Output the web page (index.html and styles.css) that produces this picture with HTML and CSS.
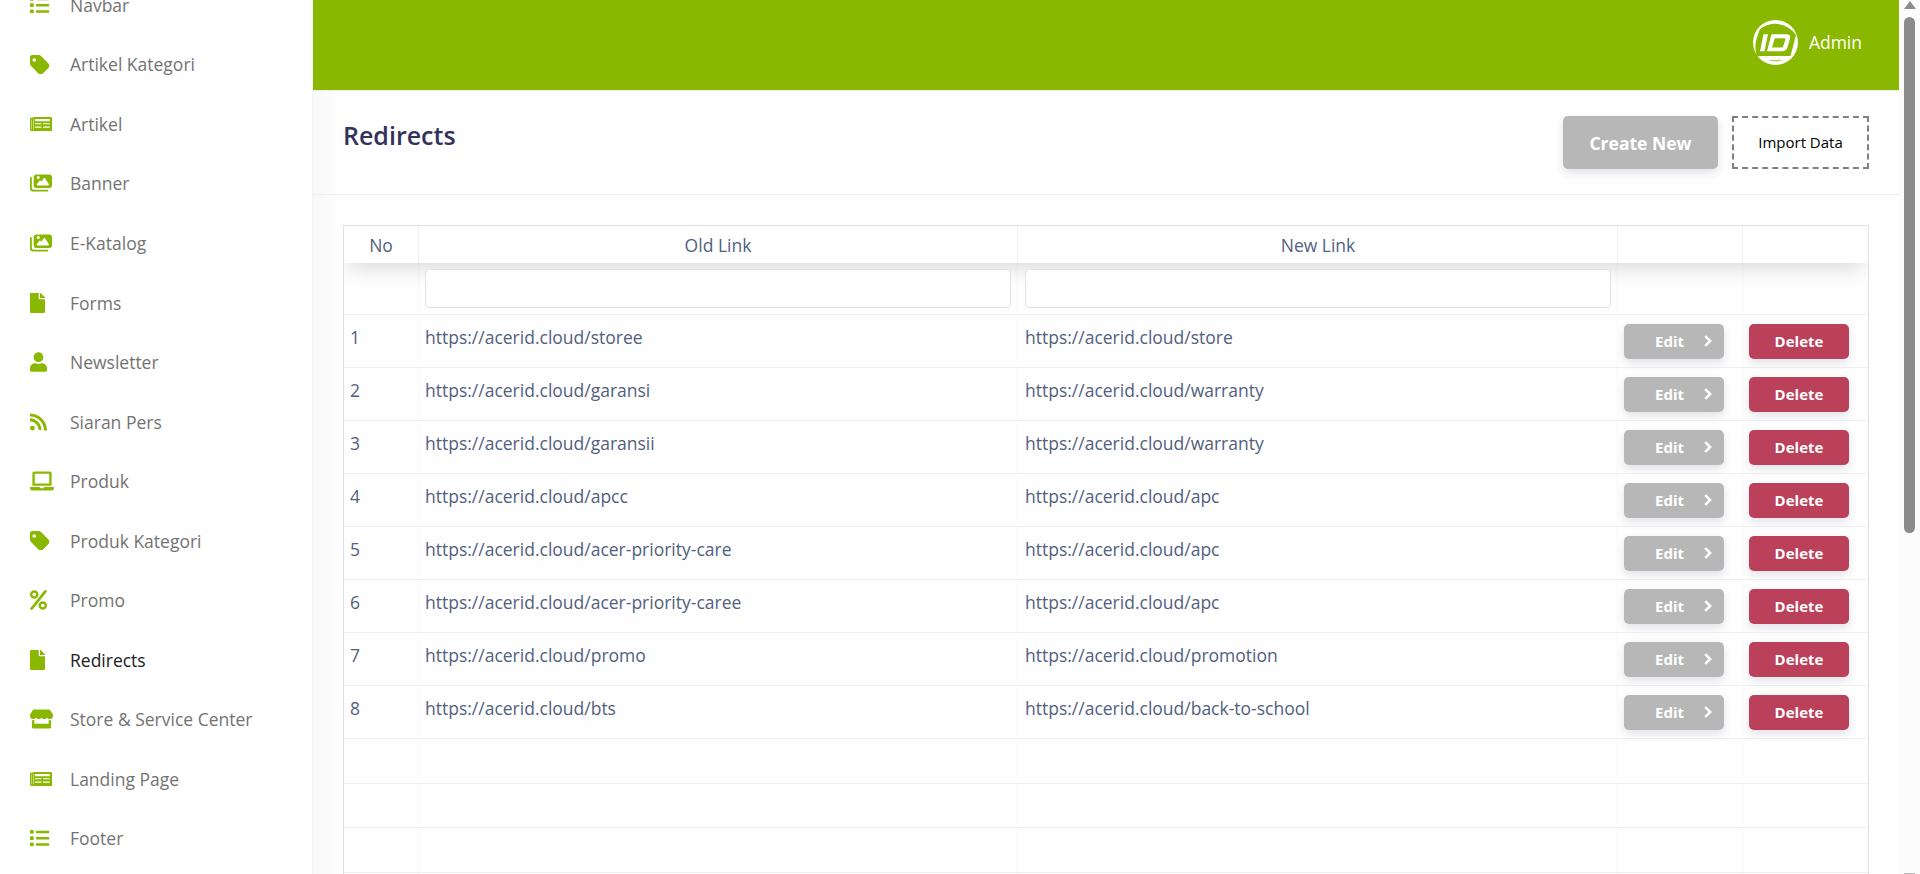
FILE: index.html
```
<!DOCTYPE html>
<html lang="id">
<head>
<meta charset="utf-8">
<title>Redirects</title>
<link rel="stylesheet" href="styles.css">
</head>
<body>
<svg class="defs" aria-hidden="true">
  <symbol id="i-list" viewBox="16 48 496 416"><path d="M40 48h48q24 0 24 24v48q0 24-24 24H40q-24 0-24-24V72q0-24 24-24zM192 64h288a32 32 0 0 1 0 64H192a32 32 0 0 1 0-64zM192 224h288a32 32 0 0 1 0 64H192a32 32 0 0 1 0-64zM192 384h288a32 32 0 0 1 0 64H192a32 32 0 0 1 0-64zM40 208h48q24 0 24 24v48q0 24-24 24H40q-24 0-24-24v-48q0-24 24-24zM40 368h48q24 0 24 24v48q0 24-24 24H40q-24 0-24-24v-48q0-24 24-24z"/></symbol>
  <symbol id="i-tag" viewBox="0 32 438 438"><path d="M0 80v149.500c0 17 6.700 33.300 18.700 45.300l176 176c25 25 65.500 25 90.500 0L418.700 317.300c25-25 25-65.500 0-90.500l-176-176c-12-12-28.300-18.700-45.300-18.700H48C21.500 32 0 53.500 0 80zm96 24a40 40 0 1 1 0 80 40 40 0 1 1 0-80z"/></symbol>
  <symbol id="i-news" viewBox="0 64 596 384"><path fill-rule="evenodd" d="M572 64H98c-13 0-24 8-28 20H24C10 84 0 98 0 112v288c0 26 22 48 48 48h524c14 0 24-10 24-24V88c0-14-10-24-24-24zM36 132h12v268q-6 8-12 0zM134 120h400v56H134zM134 234h176v28H134zM354 234h180v28H354zM134 322h176v32H134zM354 322h180v32H354zM82 112h14v292H82z"/></symbol>
  <symbol id="i-images" viewBox="0 0 576 512"><path d="M160 32c-35.300 0-64 28.700-64 64v224c0 35.300 28.700 64 64 64h352c35.300 0 64-28.700 64-64V96c0-35.300-28.700-64-64-64H160zm236 106.700 96 144c4.900 7.400 5.400 16.800 1.200 24.600S480.900 320 472 320H200c-9.200 0-17.600-5.300-21.600-13.600s-2.900-18.200 2.900-25.400l64-80c4.600-5.700 11.400-9 18.700-9s14.200 3.300 18.700 9l17.300 21.600 56-84c4.500-6.600 12-10.600 20-10.600s15.500 4 20 10.700zM176 112a40 40 0 1 1 80 0 40 40 0 1 1-80 0zM48 120c0-13.300-10.700-24-24-24S0 106.700 0 120v296q0 64 64 64h392c13.300 0 24-10.700 24-24s-10.700-24-24-24H96q-48 0-48-48V120z"/></symbol>
  <symbol id="i-file" viewBox="0 0 384 512"><path d="M224 136V0H24C10.700 0 0 10.700 0 24v464c0 13.300 10.700 24 24 24h336c13.300 0 24-10.700 24-24V160H248c-13.200 0-24-10.800-24-24zm160-14.100v6.100H256V0h6.100c6.400 0 12.500 2.500 17 7l97.900 98c4.500 4.500 7 10.600 7 16.900z"/></symbol>
  <symbol id="i-user" viewBox="0 0 448 512"><path d="M224 256c70.700 0 128-57.300 128-128S294.700 0 224 0 96 57.300 96 128s57.300 128 128 128zm89.600 32h-16.700c-22.200 10.200-46.900 16-72.900 16s-50.600-5.800-72.900-16h-16.700C60.200 288 0 348.200 0 422.400V464c0 26.500 21.500 48 48 48h352c26.500 0 48-21.500 48-48v-41.600c0-74.200-60.200-134.400-134.400-134.400z"/></symbol>
  <symbol id="i-rss" viewBox="0 0 448 512"><path d="M128 416a64 64 0 1 1-128 0 64 64 0 0 1 128 0zm175.700 47.300C295.400 304.400 168.400 169 .8 160.300-8.300 159.800 0 168 0 176v48c0 8.400 6.500 15.500 14.900 16 111.800 7.300 201.500 96.700 208.800 208.800.5 8.400 7.600 14.900 16 14.900h48c9.100 0 16.500-7.700 16-16.400zm144.200.2C439.600 229.700 251.500 40.400 16.500 32 7.500 31.700 0 39 0 48v48c0 8.600 6.800 15.600 15.500 16 191.200 7.800 344.600 161.300 352.500 352.500.4 8.600 7.400 15.500 16 15.500h48c9.100 0 16.300-7.500 15.900-16.500z"/></symbol>
  <symbol id="i-laptop" viewBox="0 0 640 512"><path fill-rule="evenodd" d="M624 416H381.500c-.7 19.800-14.700 32-32.700 32H288c-18.700 0-33-17.500-32.800-32H16c-8.800 0-16 7.200-16 16v16c0 35.200 28.800 64 64 64h512c35.200 0 64-28.800 64-64v-16c0-8.800-7.200-16-16-16zM576 48c0-26.400-21.600-48-48-48H112C85.600 0 64 21.600 64 48v336h512V48zm-64 272H128V64h384v256z"/></symbol>
  <symbol id="i-percent" viewBox="0 0 448 512"><path fill-rule="evenodd" d="M112 224a112 112 0 1 0 0-224 112 112 0 0 0 0 224zm0-160a48 48 0 1 1 0 96 48 48 0 0 1 0-96zM336 288a112 112 0 1 0 0 224 112 112 0 0 0 0-224zm0 160a48 48 0 1 1 0-96 48 48 0 0 1 0 96z"/><path d="M392 0h32q32 4 18 36L80 494q-10 18-30 18H24q-30-6-16-36L366 16q10-14 26-16z"/></symbol>
  <symbol id="i-store" viewBox="0 0 616 512"><path d="M602 118.600 537.100 15C531.300 5.700 521 0 510 0H106C95 0 84.700 5.700 78.900 15L14 118.600c-33.500 53.500-3.800 127.900 58.800 136.400 4.500.6 9.100.9 13.700.9 29.600 0 55.800-13 73.800-33.100 18 20.100 44.300 33.100 73.800 33.100 29.600 0 55.800-13 73.800-33.100 18 20.100 44.300 33.100 73.800 33.100 29.600 0 55.800-13 73.800-33.100 18.100 20.100 44.300 33.100 73.800 33.100 4.700 0 9.200-.3 13.700-.9 62.800-8.400 92.600-82.800 59-136.400zM529.500 288c-10 0-19.900-1.500-29.500-3.800V384H116v-99.800c-9.600 2.200-19.500 3.800-29.500 3.800-6 0-12.100-.4-18-1.200-5.600-.8-11.100-2.100-16.400-3.600V480c0 17.700 14.300 32 32 32h448c17.700 0 32-14.300 32-32V283.200c-5.400 1.600-10.800 2.900-16.400 3.600-6.100.8-12.100 1.200-18.200 1.200z"/></symbol>
  <symbol id="i-chev" viewBox="0 0 8 12"><path d="M1.200 1.100 6.200 6l-5 4.900" fill="none" stroke="currentColor" stroke-width="2.500"/></symbol>
</svg>

<div class="app">
  <nav class="sidebar">
    <a class="nav-item"><span class="nav-icon"><svg width="19.500" height="16.400"><use href="#i-list"/></svg></span>Navbar</a>
    <a class="nav-item"><span class="nav-icon"><svg width="19.500" height="19.500"><use href="#i-tag"/></svg></span>Artikel Kategori</a>
    <a class="nav-item"><span class="nav-icon"><svg width="22" height="14.200"><use href="#i-news"/></svg></span>Artikel</a>
    <a class="nav-item"><span class="nav-icon"><svg width="22" height="20"><use href="#i-images"/></svg></span>Banner</a>
    <a class="nav-item"><span class="nav-icon"><svg width="22" height="20"><use href="#i-images"/></svg></span>E-Katalog</a>
    <a class="nav-item"><span class="nav-icon"><svg width="15" height="20"><use href="#i-file"/></svg></span>Forms</a>
    <a class="nav-item"><span class="nav-icon"><svg width="17" height="20"><use href="#i-user"/></svg></span>Newsletter</a>
    <a class="nav-item"><span class="nav-icon"><svg width="17" height="20"><use href="#i-rss"/></svg></span>Siaran Pers</a>
    <a class="nav-item"><span class="nav-icon"><svg width="24" height="20"><use href="#i-laptop"/></svg></span>Produk</a>
    <a class="nav-item"><span class="nav-icon"><svg width="19.500" height="19.500"><use href="#i-tag"/></svg></span>Produk Kategori</a>
    <a class="nav-item"><span class="nav-icon"><svg width="17" height="20"><use href="#i-percent"/></svg></span>Promo</a>
    <a class="nav-item active"><span class="nav-icon"><svg width="15" height="20"><use href="#i-file"/></svg></span>Redirects</a>
    <a class="nav-item"><span class="nav-icon"><svg width="23" height="20"><use href="#i-store"/></svg></span>Store &amp; Service Center</a>
    <a class="nav-item"><span class="nav-icon"><svg width="22" height="14.200"><use href="#i-news"/></svg></span>Landing Page</a>
    <a class="nav-item"><span class="nav-icon"><svg width="19.500" height="16.400"><use href="#i-list"/></svg></span>Footer</a>
  </nav>

  <main class="main">
    <header class="topbar">
      <svg class="avatar" viewBox="0 0 45 45" width="45" height="45">
        <circle cx="22.500" cy="22.500" r="22.500" fill="#fff"/>
        <path fill="#8ab800" d="M8.500 8Q22 0 35 7.500Q40 10.500 43 15L37.500 36H4Q1 28 3.500 19L6.500 10z"/>
        <path fill="#fff" d="M10.500 14.300H15L11.500 31.300H7z"/>
        <path fill="#fff" fill-rule="evenodd" d="M18.500 14.300H33.500q4.500 0 3.500 4.200L34.500 27.300q-1 4-5.500 4H14zM21.800 18.200l-2.800 9.200h9.300q1.500 0 2-1.500l2-6.200q.3-1.500-1-1.500z"/>
        <path fill="#8ab800" d="M15 40.300H30Q22 42.300 15 40.300z"/>
      </svg>
      <span class="user">Admin</span>
    </header>

    <section class="page-head">
      <h1>Redirects</h1>
      <div class="actions">
        <button class="btn btn-create">Create New</button>
        <button class="btn-import">Import Data</button>
      </div>
    </section>

    <section class="content">
      <div class="grid" id="grid">
        <div class="row head"><div>No</div><div>Old Link</div><div>New Link</div><div></div><div></div></div>
        <div class="row filter"><div></div><div><input aria-label="Old Link"></div><div><input aria-label="New Link"></div><div></div><div></div></div>
      </div>
    </section>
  </main>

  <div class="scrollbar"><i class="up"></i><i class="thumb"></i><i class="down"></i></div>
</div>
<script src="app.js"></script>
</body>
</html>
```
FILE: app.js
```
const base = "https://acerid.cloud/";
const links = [
  ["storee", "store"],
  ["garansi", "warranty"],
  ["garansii", "warranty"],
  ["apcc", "apc"],
  ["acer-priority-care", "apc"],
  ["acer-priority-caree", "apc"],
  ["promo", "promotion"],
  ["bts", "back-to-school"]
];
const rows = links.map(([from, to], i) => `
  <div class="row">
    <div>${i + 1}</div><div>${base}${from}</div><div>${base}${to}</div>
    <div><button class="btn btn-edit"><span>Edit</span><svg width="8" height="12"><use href="#i-chev"/></svg></button></div>
    <div><button class="btn btn-delete">Delete</button></div>
  </div>`);
const blank = '<div class="row blank"><div></div><div></div><div></div><div></div><div></div></div>';
document.getElementById("grid").insertAdjacentHTML("beforeend", rows.join("") + blank.repeat(4));
```
FILE: styles.css
```
* { box-sizing: border-box; }
html, body { margin: 0; height: 100%; overflow: hidden; }
body { font-family: "Open Sans", "Noto Sans", sans-serif; font-size: 17.5px; color: #525f7f; background: #fefefe; }
button, input { font-family: inherit; margin: 0; }
.defs { display: none; }
.app { display: flex; height: 874px; overflow: hidden; }

.sidebar { flex: 0 0 313px; padding-left: 30px; background: #fff; border-right: 1px solid #f3f4f6; margin-top: -25px; height: 899px; }
.nav-item { display: flex; align-items: center; height: 59.550px; color: #737373; white-space: nowrap; }
.nav-item.active { color: #212121; }
.nav-icon { display: flex; align-items: center; width: 40px; color: #8ab800; }
.nav-icon svg { fill: currentColor; display: block; }

.main { flex: 1; min-width: 0; height: 874px; overflow: hidden; background: linear-gradient(90deg, #f7f8f9 0, #fefefe 26px); }
.topbar { height: 90px; background: #8ab800; display: flex; align-items: center; justify-content: flex-end; padding: 0 37px 5px 0; color: #fff; }
.avatar { margin-right: 11px; }
.user { padding-bottom: 2px; }

.page-head { height: 105px; border-top: 1px solid #e9ecef; border-bottom: 1px solid #f0f0f1; display: flex; justify-content: space-between; padding: 25px 30px 0; }
h1 { margin: 0; font-size: 25px; line-height: 39px; font-weight: 600; color: #32325d; }
.actions { display: flex; gap: 14px; }
.btn { border: 0; border-radius: 5px; color: #fff; font-weight: 700; box-shadow: 0 4px 8px rgba(50, 50, 93, .13); }
.btn-create { width: 155px; height: 53px; background: #b7b7b7; font-size: 17.500px; }
.btn-import { width: 137px; height: 53px; padding: 0 0 2px; border: 2px dashed #808080; background: #fff; color: #000; font-size: 15px; }

.content { padding: 30px 30px 0; }
.grid { border: 1px solid #dee2e6; border-bottom: 0; height: 660px; overflow: hidden; }
.row { display: grid; grid-template-columns: 75px 599px 600px 125px 1fr; height: 53px; border-bottom: 1px solid #f0f0f1; }
.row > div { padding: 9px 6px 0; border-right: 1px solid #f8f9fa; line-height: 26px; }
.row > div:nth-child(3) { padding-left: 7px; }
.row > div:last-child { border-right: 0; }
.row.head { height: 37px; border: 0; background: #fff; box-shadow: 0 10px 20px -5px rgba(0, 0, 0, .15); position: relative; }
.row.head > div { text-align: center; padding-top: 6px; border-color: #f0f0f1; }
.row.filter { height: 52px; }
.row.filter > div { padding-top: 6px; }
.row.filter input { display: block; position: relative; width: 100%; height: 39px; border: 1px solid #dee2e6; border-radius: 4px; background: #fff; }
.row.blank { height: 44.600px; }
.btn-edit, .btn-delete { display: flex; align-items: center; justify-content: center; width: 100px; height: 35px; padding: 0 0 1px; font-size: 15px; }
.btn-edit { background: #b7b7b7; justify-content: flex-end; padding-right: 12px; gap: 20px; }
.btn-delete { background: #bb4059; }

.scrollbar { flex: 0 0 21px; display: flex; flex-direction: column; align-items: center; background: #fcfcfc; }
.up { width: 0; height: 0; margin-top: 1px; border: 6px solid transparent; border-top: 0; border-bottom: 8px solid #8b8b8b; }
.thumb { width: 11px; height: 516px; margin-top: 8px; border-radius: 6px; background: #8b8b8b; }
.down { width: 11px; height: 1px; margin-top: auto; background: #b8b8b8; }
```
